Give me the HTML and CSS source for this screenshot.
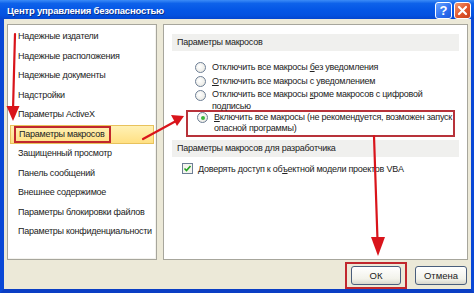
FILE: index.html
```html
<!DOCTYPE html>
<html lang="ru">
<head>
<meta charset="utf-8">
<title>Центр управления безопасностью</title>
<link rel="stylesheet" href="styles.css">
</head>
<body>
<div class="window">
  <div class="titlebar">
    <span class="title">Центр управления безопасностью</span>
    <div class="tbuttons">
      <span class="tb help">?</span>
      <span class="tb close"><svg width="15" height="15" viewBox="0 0 15 15"><path d="M4 4 L11 11 M11 4 L4 11" stroke="#fff" stroke-width="2.2" stroke-linecap="round"/></svg></span>
    </div>
  </div>
  <div class="client">
    <div class="panels">
      <ul class="nav">
        <li>Надежные издатели</li>
        <li>Надежные расположения</li>
        <li>Надежные документы</li>
        <li>Надстройки</li>
        <li>Параметры ActiveX</li>
        <li class="active"><span class="mark">Параметры макросов</span></li>
        <li>Защищенный просмотр</li>
        <li>Панель сообщений</li>
        <li>Внешнее содержимое</li>
        <li>Параметры блокировки файлов</li>
        <li>Параметры конфиденциальности</li>
      </ul>
      <div class="content">
        <div class="section-head">Параметры макросов</div>
        <div class="options">
          <div class="opt"><span class="radio"></span><span>Отключить все макросы <u>б</u>ез уведомления</span></div>
          <div class="opt"><span class="radio"></span><span><u>О</u>тключить все макросы с уведомлением</span></div>
          <div class="opt two"><span class="radio"></span><span>Отключить все макросы <u>к</u>роме макросов с цифровой<br>подписью</span></div>
          <div class="opt selected"><span class="radio on"></span><span><u>В</u>ключить все макросы (не рекомендуется, возможен запуск<br>опасной программы)</span></div>
        </div>
        <div class="section-head second">Параметры макросов для разработчика</div>
        <div class="check-row"><span class="checkbox"><svg width="9" height="9" viewBox="0 0 9 9"><path d="M1.5 4.5 L3.5 6.5 L7.5 2" fill="none" stroke="#21a121" stroke-width="1.6"/></svg></span><span>Доверять доступ к об<u>ъ</u>ектной модели проектов VBA</span></div>
      </div>
    </div>
    <div class="buttons">
      <span class="okwrap"><button class="btn">ОК</button></span>
      <button class="btn">Отмена</button>
    </div>
  </div>
  <svg class="arrows" width="474" height="293" viewBox="0 0 474 293">
    <g stroke="#d9141b" fill="#d9141b" stroke-width="2.2" stroke-linecap="round">
      <line x1="15" y1="34" x2="13" y2="110"/>
      <polygon points="6.5,106 19.5,106 13,121" stroke="none"/>
      <line x1="143" y1="139" x2="176" y2="121"/>
      <polygon points="171,115 184,116 177,126" stroke="none"/>
      <line x1="374" y1="136" x2="377.5" y2="240"/>
      <polygon points="371,237 385,237 378,256" stroke="none"/>
    </g>
  </svg>
</div>
</body>
</html>
```
FILE: styles.css
```css
* { box-sizing: border-box; }
html, body { margin: 0; padding: 0; }
body {
  width: 474px;
  height: 293px;
  overflow: hidden;
  font-family: "Liberation Sans", "DejaVu Sans", sans-serif;
  font-size: 9px;
  letter-spacing: -0.25px;
  color: #222;
  background: #0a3fd0;
}
.window {
  position: relative;
  width: 474px;
  height: 293px;
  display: flex;
  flex-direction: column;
  background: #0b4fdc;
  border-left: 4px solid #0a48d6;
  border-right: 3px solid #0a48d6;
  border-bottom: 4px solid #0a3ec4;
}
.titlebar {
  height: 22px;
  margin: 0 -3px 0 -4px;
  padding: 0 3px 0 7px;
  display: flex;
  align-items: center;
  justify-content: space-between;
  background: linear-gradient(#3c8cf7 0%, #0e62ea 18%, #0557e6 50%, #0452e0 80%, #0446cf 100%);
}
.title {
  color: #fff;
  font-weight: bold;
  font-size: 9.5px;
  letter-spacing: -0.2px;
  text-shadow: 1px 1px 0 #0a2f8a;
  margin-top: 1px;
}
.tbuttons { display: flex; gap: 2px; margin-top: 1px; }
.tb {
  width: 17px;
  height: 17px;
  border: 1px solid #fff;
  border-radius: 3px;
  display: flex;
  align-items: center;
  justify-content: center;
  color: #fff;
  font-family: "Liberation Sans", sans-serif;
  font-weight: bold;
  font-size: 13px;
  letter-spacing: 0;
}
.help { background: linear-gradient(135deg, #6aa4ff, #2c6ef0 60%, #1d58d8); }
.close { background: linear-gradient(135deg, #f09a72, #e0552a 55%, #c8401a); }
.client {
  flex: 1;
  background: #ece9d8;
  padding: 5px 3px 0 3px;
  display: flex;
  flex-direction: column;
}
.panels {
  height: 236px;
  display: flex;
  gap: 6px;
}
.nav {
  list-style: none;
  margin: 0;
  padding: 2px 2px 0 2px;
  width: 150px;
  flex: none;
  background: #fff;
  border: 1px solid #a7a69c;
  box-shadow: inset -1px -1px 0 #f4f3ee;
}
.nav li {
  height: 19.5px;
  line-height: 19.5px;
  padding-left: 8px;
  white-space: nowrap;
}
.nav li.active {
  background: linear-gradient(#fff1b5, #ffe083);
  border: 1px solid #e8c25c;
  line-height: 17.5px;
  padding-left: 3px;
}
.mark {
  display: inline-block;
  border: 2px solid #c1272d;
  line-height: 13px;
  padding: 0 4px 0 3px;
}
.content {
  flex: 1;
  min-width: 0;
  overflow: hidden;
  background: #fff;
  border: 1px solid #a7a69c;
  padding: 9px 8px 0 8px;
}
.section-head {
  height: 17px;
  line-height: 17px;
  background: #f0f0ee;
  padding-left: 5px;
  white-space: nowrap;
}
.options { padding: 10px 0 0 0; }
.opt {
  display: flex;
  align-items: flex-start;
  line-height: 12px;
  margin: 0 0 2px 23px;
  white-space: nowrap;
}
.opt.two { line-height: 11.5px; }
.opt .radio { margin-top: 0.5px; }
.radio {
  flex: none;
  width: 11px;
  height: 11px;
  border: 1px solid #6d7e95;
  border-radius: 50%;
  background: radial-gradient(circle at 40% 40%, #fff, #e4e4dc);
  margin-right: 6px;
  position: relative;
}
.radio.on::after {
  content: "";
  position: absolute;
  left: 2.5px;
  top: 2.5px;
  width: 4px;
  height: 4px;
  border-radius: 50%;
  background: #3db43d;
}
.opt.selected {
  margin: -4px 4px 0 14px;
  border: 2px solid #b8323a;
  padding: 0 0 1px 9px;
  line-height: 11px;
}
.opt.selected .radio { margin-top: 0; }
.section-head.second { margin-top: 3px; }
.check-row {
  display: flex;
  align-items: center;
  margin: 6px 0 0 10px;
  white-space: nowrap;
}
.checkbox {
  width: 11px;
  height: 11px;
  border: 1px solid #6d7e95;
  background: #f4f4ee;
  margin-right: 5px;
  display: flex;
  align-items: center;
  justify-content: center;
}
u { text-decoration: underline; text-underline-offset: 1px; }
.buttons {
  display: flex;
  justify-content: flex-end;
  align-items: center;
  gap: 8px;
  padding: 2px 1px 0 0;
}
.okwrap {
  border: 2px solid #c1272d;
  padding: 2px 4px;
  display: flex;
}
.btn {
  width: 52px;
  height: 19px;
  font-family: "Liberation Sans", "DejaVu Sans", sans-serif;
  font-size: 9.5px;
  color: #222;
  border: 1px solid #4a5e7c;
  border-radius: 3px;
  background: linear-gradient(#ffffff, #f2f2ea 70%, #d8d6cc);
  padding: 0;
}
.okwrap .btn { width: 50px; }
.arrows {
  position: absolute;
  left: -4px;
  top: 0;
  pointer-events: none;
}
```
